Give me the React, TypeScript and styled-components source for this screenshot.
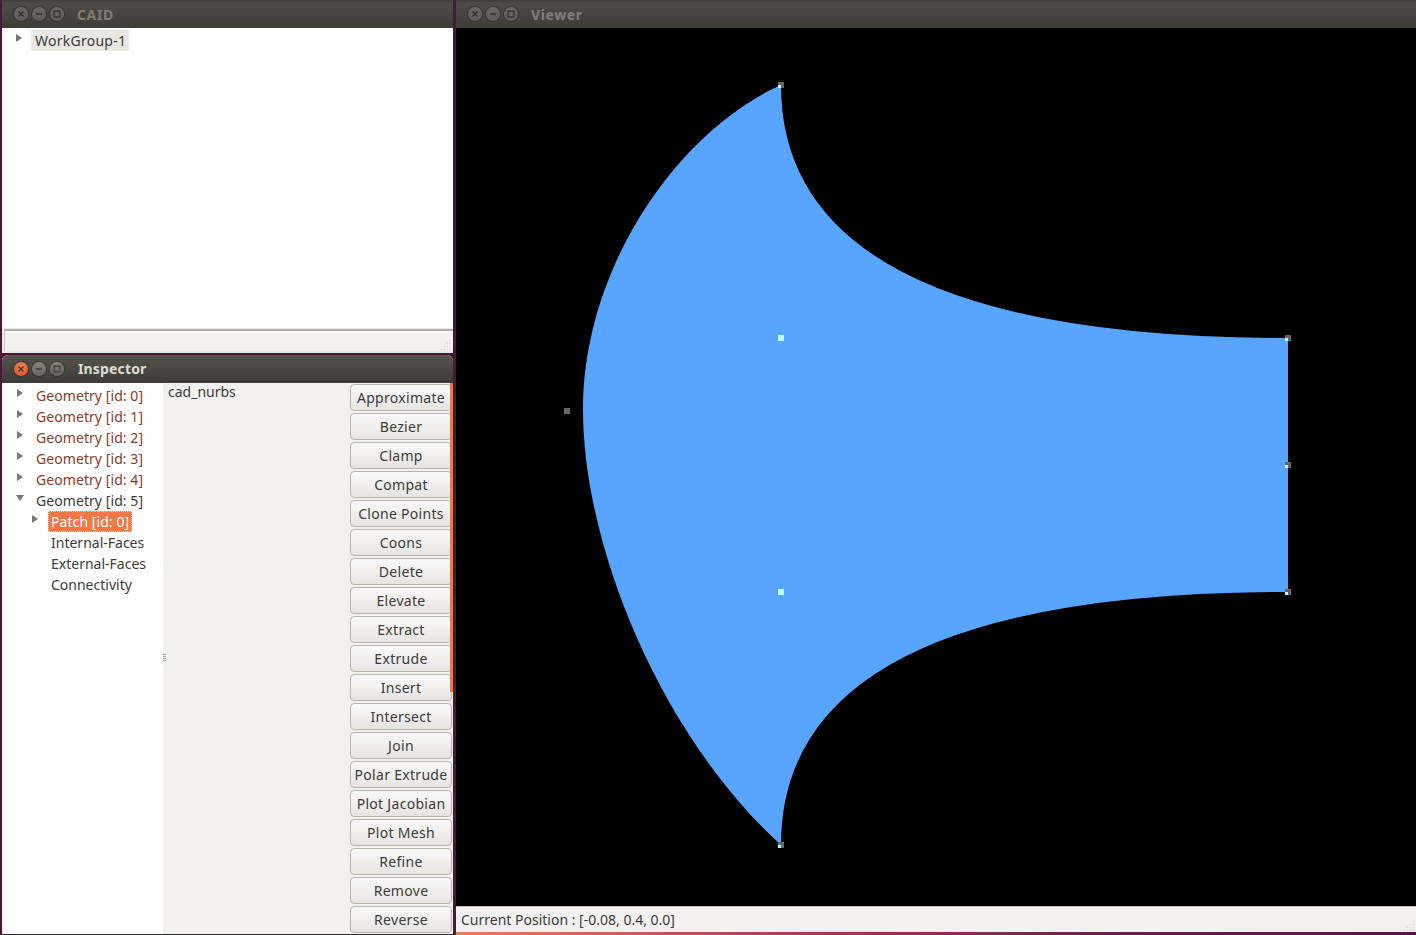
import * as React from "react";
import styled, { createGlobalStyle } from "styled-components";

const GlobalStyle = createGlobalStyle`
  html, body {
    margin: 0;
    padding: 0;
    height: 935px;
    overflow: hidden;
    background: #5a1744;
  }
`;

const Desktop = styled.div`
  display: flex;
  width: 1416px;
  height: 935px;
  overflow: hidden;
  font-family: "Noto Sans", "Open Sans", sans-serif;
  font-size: 14px;
  color: #3c3b37;
  background: #4f1239;
`;

const LeftColumn = styled.div`
  display: flex;
  flex-direction: column;
  width: 456px;
  flex: none;
  padding-left: 2px;
  box-sizing: border-box;
`;

const CaidWindow = styled.section`
  display: flex;
  flex-direction: column;
  width: 451px;
  height: 353px;
  flex: none;
  background: #fff;
`;

const InspectorWindow = styled.section`
  display: flex;
  flex-direction: column;
  width: 451px;
  height: 579px;
  margin-top: 2px;
  flex: none;
  background: #fff;
  border-bottom: 1px solid #2c2b28;
  border-radius: 6px 6px 0 0;
  overflow: hidden;
  position: relative;
`;

const ViewerWindow = styled.section`
  display: flex;
  flex-direction: column;
  flex: 1;
  height: 932px;
  background: #f2f1f0;
  border-left: 1px solid #2c2b28;
  margin-left: -1px;
`;

const TitleBar = styled.header<{ $active?: boolean }>`
  display: flex;
  align-items: center;
  height: 28px;
  flex: none;
  padding-left: 12px;
  box-sizing: border-box;
  background: ${(p) =>
    p.$active
      ? "linear-gradient(#55534d, #3c3b37)"
      : "linear-gradient(#3f3e3a, #4b4a45 12%, #3e3d39)"};
`;

const Controls = styled.div`
  display: flex;
  gap: 4px;
  width: 52px;
  flex: none;
`;

const Control = styled.span<{ $close?: boolean; $active?: boolean }>`
  display: flex;
  align-items: center;
  justify-content: center;
  width: 14px;
  height: 14px;
  border-radius: 50%;
  color: ${(p) => (p.$active ? "#3c3b37" : "#2f2e2b")};
  background: ${(p) =>
    p.$close && p.$active
      ? "radial-gradient(circle at 50% 30%, #f2845a, #e0491e)"
      : p.$active
        ? "linear-gradient(#85837b, #65635c)"
        : "linear-gradient(#6b6962, #5d5b55)"};
  box-shadow: 0 0 0 1px rgba(30, 29, 27, 0.35);
`;

const Title = styled.span<{ $active?: boolean; $gap: number }>`
  margin-left: ${(p) => p.$gap}px;
  margin-bottom: ${(p) => (p.$active ? 2 : 0)}px;
  font-weight: 700;
  font-size: 14px;
  letter-spacing: ${(p) => (p.$active ? 0.15 : 0.6)}px;
  color: ${(p) => (p.$active ? "#dfdbd2" : "#7f7d75")};
`;

const TreeArea = styled.div`
  flex: 1;
  padding-top: 2px;
  background: #fff;
`;

const TreeRow = styled.div<{ $indent: number }>`
  display: flex;
  align-items: center;
  height: 21px;
  padding-left: ${(p) => p.$indent}px;
  white-space: nowrap;
`;

const ArrowSlot = styled.span<{ $width: number }>`
  display: flex;
  align-items: center;
  width: ${(p) => p.$width}px;
  height: 21px;
  flex: none;
  padding-bottom: 5px;
  box-sizing: border-box;
`;

const ArrowRight = styled.i`
  display: block;
  width: 0;
  height: 0;
  border-style: solid;
  border-width: 4px 0 4px 6px;
  border-color: transparent transparent transparent #77766f;
`;

const ArrowDown = styled.i`
  display: block;
  width: 0;
  height: 0;
  margin-left: -1px;
  border-style: solid;
  border-width: 6px 4px 0 4px;
  border-color: #77766f transparent transparent transparent;
`;

const ItemText = styled.span<{ $tone?: "closed" | "open" }>`
  line-height: 21px;
  letter-spacing: 0.07px;
  color: ${(p) => (p.$tone === "closed" ? "#8a3b28" : "#3c3b37")};
`;

const ChildText = styled.span`
  padding: 0 3px;
  line-height: 21px;
  color: #3c3b37;
`;

const SelectedText = styled.span`
  padding: 0 2px;
  line-height: 19px;
  letter-spacing: 0.07px;
  color: #fff;
  background: #f07746;
  border: 1px dotted #ffd9c8;
`;

const WorkGroupLabel = styled.span`
  padding: 0 3px 0 4px;
  line-height: 21px;
  letter-spacing: 0.25px;
  color: #3c3b37;
  background: #e9e7e4;
`;

const StatusBar = styled.footer<{ $height: number }>`
  display: flex;
  align-items: center;
  justify-content: space-between;
  height: ${(p) => p.$height}px;
  flex: none;
  margin: 0 0 0 2px;
  padding: 0 1px 0 3px;
  box-sizing: border-box;
  color: #3c3b37;
  background: #f2f1f0;
  border-top: 2px solid #b0aea8;
  border-left: 1px solid #c9c7c2;
  box-shadow: 0 2px 0 #fff inset;
`;

const CaidStatus = styled.div`
  padding: 1px 0 2px;
  background: #ebeae8;
`;

const Grip = styled.svg`
  width: 12px;
  height: 12px;
  flex: none;
  align-self: flex-end;
`;

const InspectorBody = styled.div`
  display: flex;
  flex: 1;
  min-height: 0;
`;

const InspectorTree = styled.div`
  width: 161px;
  flex: none;
  padding-top: 2px;
  background: #fff;
`;

const Pane = styled.div`
  display: flex;
  flex: 1;
  min-width: 0;
  background: #f2f1f0;
`;

const PaneName = styled.div`
  flex: 1;
  padding-left: 5px;
  line-height: 18px;
`;

const Splitter = styled.span`
  position: absolute;
  left: 161px;
  top: 299px;
  width: 3px;
  height: 8px;
  background: repeating-linear-gradient(#a9a7a1 0 1px, transparent 1px 2px);
`;

const ButtonColumn = styled.div`
  display: flex;
  flex-direction: column;
  gap: 2px;
  width: 103px;
  flex: none;
  padding: 1px 1px 0 0;
  box-sizing: border-box;
  overflow: hidden;
`;

const ActionButton = styled.button`
  height: 27px;
  flex: none;
  padding: 0;
  margin: 0;
  font: inherit;
  letter-spacing: 0.3px;
  color: #3c3b37;
  border: 1px solid #b9b6b0;
  border-radius: 4px;
  background: linear-gradient(#f9f8f8, #f2f1f0 45%, #e6e4e1);
`;

const ScrollThumb = styled.span`
  position: absolute;
  right: 0;
  top: 28px;
  width: 3px;
  height: 309px;
  background: #f07746;
`;

const Canvas = styled.svg`
  display: block;
  flex: 1;
  width: 100%;
  min-height: 0;
  background: #000;
`;

const ViewerStatus = styled(StatusBar)`
  margin: 0;
  padding-left: 5px;
  border-left: none;
  border-top: 1px solid #c4c2bd;
  box-shadow: none;
`;

const BottomStrip = styled.div`
  position: absolute;
  left: 456px;
  top: 932px;
  width: 960px;
  height: 3px;
  background: linear-gradient(90deg, #e8825a, #a8485a 30%, #6a1a4a 70%, #5a1344);
`;

const closedGeometries = [0, 1, 2, 3, 4];

const buttons = [
  "Approximate",
  "Bezier",
  "Clamp",
  "Compat",
  "Clone Points",
  "Coons",
  "Delete",
  "Elevate",
  "Extract",
  "Extrude",
  "Insert",
  "Intersect",
  "Join",
  "Polar Extrude",
  "Plot Jacobian",
  "Plot Mesh",
  "Refine",
  "Remove",
  "Reverse",
];

const greyHandles = [
  [781, 85],
  [1288, 338],
  [1288, 465],
  [1288, 592],
  [781, 845],
  [567, 411],
];

const cyanHandles = [
  [781, 338],
  [781, 592],
];

const gripDots = [
  [10, 2],
  [7, 5],
  [10, 5],
  [4, 8],
  [7, 8],
  [10, 8],
  [1, 11],
  [4, 11],
  [7, 11],
  [10, 11],
];

const surface =
  "M781 85 Q781 338 1288 338 L1288 592 Q781 592 781 845 " +
  "C660 735 583 545 583 410 C583 265 680 130 781 85 Z";

const WindowControls = ({ active }: { active?: boolean }) => (
  <Controls>
    <Control $close $active={active}>
      <svg width="8" height="8" viewBox="0 0 8 8">
        <path d="M1.5 1.5 6.5 6.5M6.5 1.5 1.5 6.5" stroke="currentColor" strokeWidth="1.4" />
      </svg>
    </Control>
    <Control $active={active}>
      <svg width="8" height="8" viewBox="0 0 8 8">
        <path d="M1 4H7" stroke="currentColor" strokeWidth="1.4" />
      </svg>
    </Control>
    <Control $active={active}>
      <svg width="8" height="8" viewBox="0 0 8 8">
        <rect x="1" y="1" width="6" height="6" fill="none" stroke="currentColor" strokeWidth="1.2" />
      </svg>
    </Control>
  </Controls>
);

const ResizeGrip = () => (
  <Grip viewBox="0 0 12 12">
    {gripDots.map(([x, y]) => (
      <rect key={`${x}-${y}`} x={x} y={y - 1} width="1" height="1" fill="#fff" stroke="#d8d6d2" strokeWidth="0.4" />
    ))}
  </Grip>
);

const App = () => (
  <Desktop>
    <GlobalStyle />
    <LeftColumn>
      <CaidWindow>
        <TitleBar>
          <WindowControls />
          <Title $gap={11}>CAID</Title>
        </TitleBar>
        <TreeArea>
          <TreeRow $indent={14}>
            <ArrowSlot $width={15}>
              <ArrowRight />
            </ArrowSlot>
            <WorkGroupLabel>WorkGroup-1</WorkGroupLabel>
          </TreeRow>
        </TreeArea>
        <CaidStatus>
          <StatusBar $height={22}>
            <span />
            <ResizeGrip />
          </StatusBar>
        </CaidStatus>
      </CaidWindow>
      <InspectorWindow>
        <TitleBar $active>
          <WindowControls active />
          <Title $active $gap={12}>Inspector</Title>
        </TitleBar>
        <InspectorBody>
          <InspectorTree>
            {closedGeometries.map((id) => (
              <TreeRow key={id} $indent={15}>
                <ArrowSlot $width={19}>
                  <ArrowRight />
                </ArrowSlot>
                <ItemText $tone="closed">{`Geometry [id: ${id}]`}</ItemText>
              </TreeRow>
            ))}
            <TreeRow $indent={15}>
              <ArrowSlot $width={19}>
                <ArrowDown />
              </ArrowSlot>
              <ItemText $tone="open">Geometry [id: 5]</ItemText>
            </TreeRow>
            <TreeRow $indent={30}>
              <ArrowSlot $width={16}>
                <ArrowRight />
              </ArrowSlot>
              <SelectedText>Patch [id: 0]</SelectedText>
            </TreeRow>
            {["Internal-Faces", "External-Faces", "Connectivity"].map((name) => (
              <TreeRow key={name} $indent={30}>
                <ArrowSlot $width={16} />
                <ChildText>{name}</ChildText>
              </TreeRow>
            ))}
          </InspectorTree>
          <Pane>
            <PaneName>cad_nurbs</PaneName>
            <ButtonColumn>
              {buttons.map((name) => (
                <ActionButton key={name}>{name}</ActionButton>
              ))}
            </ButtonColumn>
          </Pane>
        </InspectorBody>
        <Splitter />
        <ScrollThumb />
      </InspectorWindow>
    </LeftColumn>
    <ViewerWindow>
      <TitleBar>
        <WindowControls />
        <Title $gap={11}>Viewer</Title>
      </TitleBar>
      <Canvas viewBox="456 28 960 878" preserveAspectRatio="xMinYMin">
        <path d={surface} fill="#57a5ff" />
        {greyHandles.map(([x, y]) => (
          <g key={`${x}-${y}`}>
            <rect x={x - 3} y={y - 3} width="6" height="6" fill="#666" />
            {x !== 567 && <rect x={x - 3} y={y} width="3" height="3" fill="#b8ffff" />}
          </g>
        ))}
        {cyanHandles.map(([x, y]) => (
          <rect key={`${x}-${y}`} x={x - 3} y={y - 3} width="6" height="6" fill="#b8ffff" />
        ))}
      </Canvas>
      <ViewerStatus $height={26}>
        <span>Current Position : [-0.08, 0.4, 0.0]</span>
        <ResizeGrip />
      </ViewerStatus>
    </ViewerWindow>
    <BottomStrip />
  </Desktop>
);

export default App;
